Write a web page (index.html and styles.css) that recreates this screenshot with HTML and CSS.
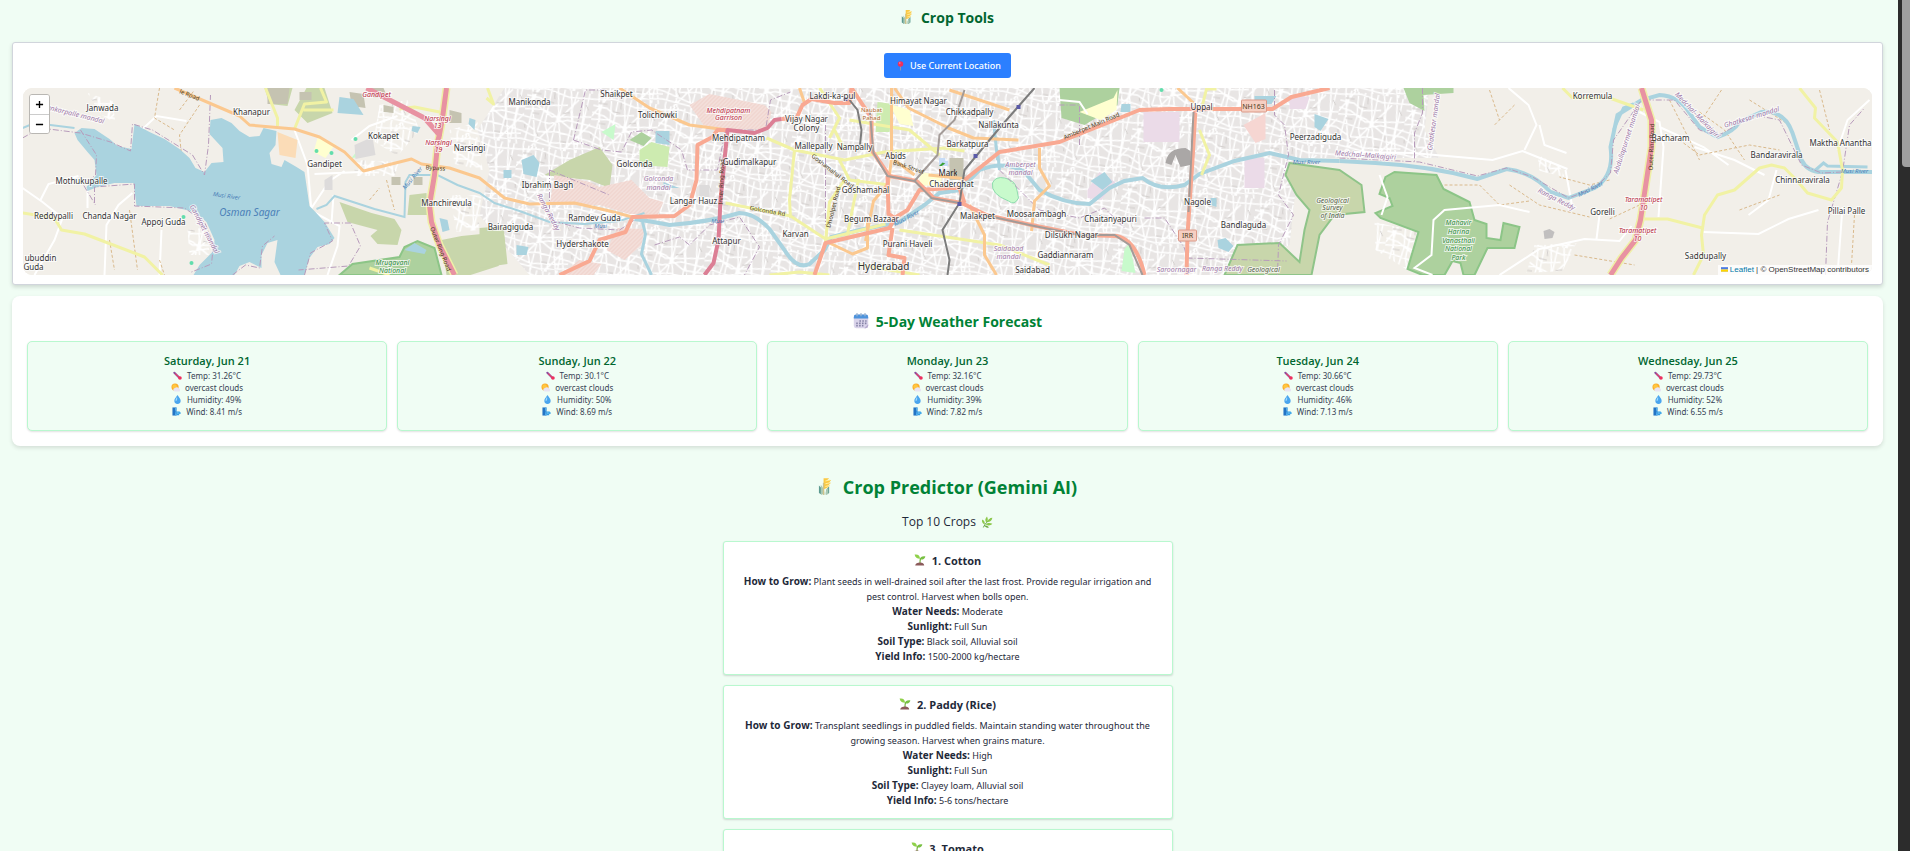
FILE: index.html
```html
<!DOCTYPE html>
<html lang="en">
<head>
<meta charset="utf-8">
<title>Crop Tools</title>
<link rel="stylesheet" href="styles.css">
</head>
<body>
<svg class="defs" aria-hidden="true">
  <symbol id="wheat" viewBox="0 0 14 20">
    <path d="M1 17V9l3 3v7zM12 10v7l-3 2c-1-4 0-7 3-9z" fill="#5d9a90"/>
    <path d="M3 18V8c3 3 4 7 4 11M8 19c0-4 1-6 3-8v7z" fill="#a9c9b4"/>
    <path d="M6 1h6l-2 2h4l-2 3h2l-3 3h2l-4 3-3 1V5z" fill="#fbc944"/>
    <path d="M8 4l5-1M8 7l5-1M8 10l4-1" stroke="#fff0a8" stroke-width="1"/>
    <path d="M6 6v13" stroke="#cfc38a" stroke-width="1.500"/>
  </symbol>
  <symbol id="pin" viewBox="0 0 12 20">
    <path d="M6 9v10" stroke="#8b93b8" stroke-width="2"/><circle cx="6" cy="6" r="5.500" fill="#f0305c"/><circle cx="4.500" cy="4" r="1.600" fill="#ff8ca4"/>
  </symbol>
  <symbol id="calendar" viewBox="0 0 20 20">
    <rect x="1" y="2" width="18" height="17" rx="3" fill="#d9d3ea"/><path d="M1 7V5q0-3 3-3h12q3 0 3 3v2z" fill="#4d93dc"/>
    <path d="M5 0v4M10 0v4M15 0v4" stroke="#9fb6cf" stroke-width="1.500"/>
    <path d="M8 10h9M4 13h13M4 16h9" stroke="#8784a8" stroke-width="2" stroke-dasharray="2 1.600"/>
    <path d="M14 19l5-5v2q0 3-3 3z" fill="#b7abd0"/>
  </symbol>
  <symbol id="thermometer" viewBox="0 0 20 20">
    <path d="M3 4l11 11" stroke="#8c4f9e" stroke-width="4.500" stroke-linecap="round"/><path d="M5 6l10 10" stroke="#ee4068" stroke-width="2.500"/><circle cx="15.500" cy="15.500" r="4" fill="#ef2f5d"/>
  </symbol>
  <symbol id="cloud" viewBox="0 0 20 20">
    <circle cx="9" cy="9" r="8" fill="#fbab2b"/><circle cx="8" cy="8" r="5" fill="#ffc740"/><path d="M9 19a4 4 0 0 1 0-8 5 5 0 0 1 8 1 3.500 3.500 0 0 1 0 7z" fill="#e9e4f3"/>
  </symbol>
  <symbol id="drop" viewBox="0 0 20 20">
    <path d="M10 0c3 5 7 8 7 13a7 7 0 0 1-14 0C3 8 7 5 10 0z" fill="#4aa5ee"/><path d="M9 4c-2 4-4 6-3 10 3 0 4-5 3-10z" fill="#9fdcff"/>
  </symbol>
  <symbol id="wind" viewBox="0 0 20 20">
    <path d="M1 1h9v18H1z" fill="#2474c4"/><path d="M7 1h3v5c-3 2-3 6 0 8v5H7z" fill="#5bb7f0"/><path d="M9 11h7M9 14h9M11 17h4" stroke="#2e9be6" stroke-width="2.500" stroke-linecap="round"/><circle cx="16.500" cy="13" r="2.500" fill="#3fa9ec"/>
  </symbol>
  <symbol id="herb" viewBox="0 0 20 20">
    <path d="M4 19C7 12 11 9 17 4" stroke="#5a9a3b" stroke-width="1.600" fill="none"/>
    <path d="M9 11C6 8 7 4 10 1c2 4 2 7-1 10zM6 14C2 13 1 9 2 6c4 2 5 5 4 8zM11 10c0-4 3-6 8-7-1 5-4 7-8 7zM8 14c3-3 7-3 11-1-3 3-7 4-11 1z" fill="#8cc84b"/>
    <path d="M6 16c3 0 6 1 7 3-3 1-6 0-7-3z" fill="#6aa83f"/>
  </symbol>
  <symbol id="seedling" viewBox="0 0 20 20">
    <path d="M10 15c0-4 0-5 1-8" stroke="#6fae3a" stroke-width="2" fill="none"/><path d="M1 1c5-1 9 1 9 7C5 8 2 6 1 1z" fill="#8fd14a"/><path d="M10 9c0-4 4-6 9-5-1 4-4 6-9 5z" fill="#79c143"/>
    <path d="M2 19c0-3 4-5 8-5s7 2 7 5z" fill="#8b5a5a"/>
  </symbol>
</svg>

<div class="screen">
<main class="page">
  <h1 class="page-title"><svg class="icon icon-wheat"><use href="#wheat"/></svg>Crop Tools</h1>

  <section class="map-card">
    <button class="locate" type="button"><svg class="icon icon-sm"><use href="#pin"/></svg>Use Current Location</button>
    <div class="map">
      <svg class="map-art" viewBox="23 88 1850 187" preserveAspectRatio="xMidYMid slice" role="img" aria-label="Map of Hyderabad">
        <defs>
          <pattern id="streets" width="67" height="61" patternUnits="userSpaceOnUse" patternTransform="rotate(9)">
            <path d="M0 5l20-3 22 5 25-2M0 11l14 1 10 6 18-3M0 18l12 2 16 9 39-6M0 25l18-2 10 3 20 12 19 0M0 32l26 4 18-6 23 2M0 38l15 8 21-3 31 4M0 47l30 8 37-5M0 55l40 4 27-4M4 0l4 22-4 39M10 0l-3 20 9 41M17 0l2 25-6 36M24 0l-2 36 9 25M30 0l4 24-4 37M37 0l-2 31 7 30M43 0l6 30-3 31M50 0l-4 21 10 40M56 0l3 25-2 36M62 0l-3 40 5 21M0 22L14 0M12 61L52 8M44 61L67 30" stroke="#fff" stroke-width="1.500" fill="none"/>
            <path d="M5 8h9M20 14l8 1M38 24l7-2M8 28h7M14 45l3 5M27 4l1 7M50 39v6M2 40l1 4M60 12l3 5M40 52h6" stroke="#d2cecc" stroke-width="1"/>
          </pattern>
          <pattern id="hatch" width="4" height="4" patternUnits="userSpaceOnUse"><rect width="4" height="4" fill="#f3ded9"/><path d="M0 4L4 0" stroke="#efcfc9" stroke-width="1"/></pattern>
        </defs>
        <rect x="23" y="88" width="1850" height="187" fill="#f2efe9"/>
        <path d="M505 88H1430L1425 130 1440 158H1300L1295 200 1290 245 1225 275H530L500 240 480 215 490 170 478 130z" fill="#e8e5e4"/>
        <path d="M505 88H1430L1425 130 1440 158H1300L1295 200 1290 245 1225 275H530L500 240 480 215 490 170 478 130zM380 105l28-5 12 30-22 26-24-15zM450 130l28-8 5 48-28-6zM355 160l45 2-5 14-40 0zM450 195l32 0-3 35-22 2zM88 93l25 8 3 22-14-8zM188 230l20-3 2 28-20 0zM1375 222l45 10-12 38-32-20zM1535 245l42-2-14 28-36 2zM1538 155l22 10 5 12-25-6z" fill="url(#streets)"/>
        <g class="streets">
          <path d="M23 188l20 14 20 16-8 22-20 35M41 200l8-16 30-8M105 275l2-50 12-20 14-12M88 208l0-18M160 275l2-45M142 130l15-14 30 5M295 130l13 35 4 46 28 15-2 20-10 29M315 174l45-2M310 211l20-30 15-10M334 195l-2 28M352 140l18-14 28-10M1353 152l60 1 80 7 30-9 45 18M1525 150l12-25-8-20-20-17M1566 170l7 38M1600 215l-3 24M1500 275l40-26 45-10 35 2 12-15M1640 112l20 10 4 25-5 70M1695 147l40 13 30 15M1660 127l44 20 25 18M1704 232l55 2 30-15 30-9M1777 170l-8 30-20 15M1843 207l-5 68M1838 150l10-30 22-20M1540 125l5 20 22 8"/>
        </g>
        <g class="tracks">
          <path d="M160 88l-5 30 20 12M200 105l-20 30 2 20M180 110l15-20M110 240l5 30M130 210l8 60M160 260l5 15M1445 185l35 0 20 20 30-4M1510 185l30 20 50 12M1610 180l-20 5-30-8M1680 140l20 15 50-10 30 5M1700 112l25 18 20 30M1670 100l30 60M1640 205l-30 14M1740 210l40-15M1722 90l-20 30M1750 100l40 25M1820 90l10 40M1855 215l-3 50M1490 90l10 30M1515 105l-20 20M1575 255l60 10M1380 190l20 15M387 180l8 30M370 200l10-12"/>
        </g>
        <g fill="#c8d6ab">
          <path d="M340 202l32 11 23 6 7 11-4 15-20-1-7-8 7-6-30-8zM410 195l17-2 1 22-20 0zM442 240l20-4 30-3 10 25-3 8-28 9h-24z"/>
          <path d="M545 175l25-15 30-13 13 18-3 23-20-8-30-3zM480 228l24-2 4 38-28 4z"/>
          <path class="park-edge" d="M1290 163l50 7 22 15 3 27-30 3-15 20-8 40h-87l13-30 42-2 20 19 5-32 5-20-13-15-11-20z"/>
          <path d="M295 110l12-22h18l8 25-25 10zM265 88h28l-5 18-18-2z"/>
        </g>
        <g fill="#add19e">
          <path class="reserve" d="M340 275l13-11 47-7 5-10 13-6 17 7 7 27z"/>
          <path class="reserve" d="M1386 177l9-5 42 3 7 14 26 13 5 18 12 4v14l14 2 3-17 16 4-5 21-27 0-13 27h-11l-3-12-8-2-8 14h-22l-15-6 11-37-38-14-5-5 17-7-3-8-10-4z"/>
          <path d="M1060 88h60l-2 17-33 20-23-7zM1404 88h50l0 5-30 2 1 16-15-8zM630 140l12-8 10 6-8 8z"/>
        </g>
        <g fill="#cdebb0"><path d="M640 150l12-8 18 5-2 20-28-2zM878 102l16 2-4 28-14 0z"/></g>
        <g fill="#c8facc" stroke="#8fdcae"><path d="M993 183q3-7 12-5 10 2 12 10l2 10q-4 8-10 3-18-7-16-18z"/><path stroke="none" d="M602 132l14-8-2 16zM352 158l8-10 0 9zM1130 243l6 30-14-2 3-22z"/></g>
        <g fill="url(#hatch)"><path d="M555 175l35 7 10 5 32-7 18 18 14 4-6 13-28-1-30-9h-50zM618 228l27 1-3 16-17 15-18-10zM690 105l20-11 55 11 7 7-4 18-62-2zM560 275l20-15 22 4-8 11z"/></g>
        <g fill="#ebdbe8"><path d="M1144 112h36v30h-36zM1088 190l12-18 16 10-14 18-14-2zM1245 158h20v30h-20zM1290 95l20 2-4 12h-16z"/></g>
        <path d="M1244 125l22-12v26l-10 4z" fill="#f6d6d2"/>
        <path d="M278 132l20 8-2 18-16-3z" fill="#fbdcb7"/>
        <g fill="#ffffd0"><path d="M318 138l18 6-10 14-12-6zM1080 112l34-14 4-8-1 20-16 10zM920 172l22 3v12l-22-2zM890 104l20 6 4 16-14-2z"/></g>
        <g fill="#c5c3b1"><path d="M268 88h22l-2 16-20 0zM350 92l14 2 2 14-14-2zM370 88h14l4 10-14 0zM384 105l10 2v6l-10-1zM300 92l12 0v8h-12zM450 110l12 3v10l-12 0zM392 177h9v8h-9zM414 177h9v8h-9zM950 158h14v22h-14z"/></g>
        <g fill="#dddbdb"><path d="M355 145l18-8 3 18-20 4zM700 185h10v12h-10zM325 180l8-5v15h-8z"/></g>
        <path d="M1166 163q2-15 20-15l5 3v14l-10 2-5-12-4 10z" fill="#aaa7a6"/>
        <path d="M1544 231l6-2 5 3-2 6-8 1z" fill="#c1bfbf"/>

        <g class="water-fill">
          <path d="M75 133L82 128 95 129 110 139 118 146 132 149 135 124 150 132 165 139 180 149 190 158 196 168 205 172 212 163 224 162 223 148 210 134 211 120 222 118 232 123 240 131 250 137 260 136 264 128 277 131 276 145 270 153 272 164 282 167 285 160 297 167 305 172 310 206 315 211 325 222 335 238 330 244 318 247 310 258 305 275H281L275 262 278 240 268 243 262 255 262 268 250 262 240 266 235 275H194L200 265 213 252 215 240 207 222 195 212 170 206H137L134 183 115 183 98 187 88 191 87 187 97 175 95 160 88 152 78 140z"/>
          <path d="M340 97l14 2 10 16-26-2zM405 250l10-7 12 7-2 4-16-3zM440 218l8 2 2 10-7 2zM470 118l6 2-1 10-6-6zM522 160l12-5 6 8-3 14-13-3zM504 170l8 0v8h-8zM517 245l12 2-2 8h-10zM656 131l14 0 0 14-14-2zM1122 104h9v8h-10zM1091 181l14-9 8 10-10 8zM1211 198l6 0v9l-6-2zM1218 240l8-2 8 8-5 6-10-4zM1255 96h22l-5 8-17 0zM1315 114l14 5-8 12-6-4zM413 126l8 1-3 6-6-2zM680 188l-16 0 0-6z"/>
        </g>
        <g class="river">
          <path d="M23 128l12-5 40 5" stroke-width="2"/>
          <path d="M317 209l10-4 8-9 40 13 30 8 1-35 4-7 28 0 20 10 22 8 15 10 25 8 30 11 35 2 35-3 25-8" stroke-width="2"/>
          <path d="M635 219Q655 222 670 225 Q710 222 740 213 Q755 213 770 229L785 250Q797 270 810 264L825 250 832 237 860 230 900 222 925 205 940 193 960 190 980 170Q1005 160 1025 172L1040 190Q1065 204 1090 204L1110 188 1125 181 1143 178Q1160 192 1185 185L1200 174 1235 161 1270 153 1300 160 1340 161" stroke-width="4"/>
          <path d="M643 222l3 12-4 20 10 21M998 160l-4-40M998 150l2 20" stroke-width="3"/>
          <path d="M1340 161L1376 163Q1431 166 1478 179L1507 169Q1533 172 1551 192L1569 198 1595 188Q1615 176 1611 147L1618 115 1642 100 1660 95Q1680 96 1690 113L1700 127 1718 137Q1734 132 1740 122L1762 112Q1785 110 1793 133L1802 160Q1808 172 1822 172H1873" stroke-width="4"/>
          <path d="M1614 130l10-22 10-4M1816 170l8-7 4 3 40 1" stroke-width="3"/>
        </g>
        <g class="border">
          <path d="M23 138l18-10 40 5 30 9 20 9 2-27 20 6 40 25 12 20 4-30 2-50M81 130l16 25-1 20-12 10 12 20M95 203v-16l40-3v22l50 2 20 14 9 22-2 20-20 8M233 275l13-10 14 3 3-22 12-10M305 275l6-22 22-12-8-18 26 0 10 23-12 20-50 4"/>
          <path d="M574 140l12-50 20 0M574 140l28 10 20 2 10-20 20-2 30 20 6 20h30l8-40 40 0 5-30 20-8M550 170l60 25M550 170v50l30 8 40 2 15-10M655 245l25-8 10 8 20-20 30-8 20 30-15 28M826 125v100M1000 170l20 20 20 20 40 8 25-10 20 20M1080 145v-40l-20 0M1145 218l20 0 20 30 5 25M1187 258l100 3M1275 90l0 25 10 10 4 30-10 40 15 20-15 30-1 30M1423 88l0 25-8 20 0 30"/>
          <path d="M1340 158L1420 162 1478 176 1507 168 1533 177 1569 198 1595 188 1611 173 1614 140 1642 100 1675 100 1700 130 1718 136 1755 115 1780 120 1802 165 1822 173 1843 172 1850 125 1865 108M1843 172l-15 50-2 53"/>
        </g>

        <g class="road yellow">
          <path d="M23 213L55 218 62 230 85 234 145 257 163 275M266 88l12 30 0 8M295 129l10-25 22-2-6-14M304 110l30 0M400 109l15-2 30 6M1645 219h23l35 9M1694 275L1704 255 1702 235 1705 215 1718 195 1735 190 1760 168 1772 165 1785 168 1797 180 1808 193 1832 200 1842 188 1843 170 1838 142 1815 118 1816 108 1800 88M1563 88l10 10h37l34 12"/>
          <path d="M767 138l28 12 50 10 40-8 60-4 20 3M795 150l-5 50 1 18M726 203l65 13 35 23 60-15M845 150l-10-20M840 160l10 20 40 5M826 242l4-40 15-22M847 239l12-60M770 275l30-3 30 3M860 265l60 10M900 230l100 15 50 20M820 88l20 30-10 20M850 120l60 10 30 25M1202 109l5-20 10 0M1200 130l10 25-8 20M487 98l7 6-6-16M370 268l20 7"/>
        </g>
        <g class="road orange">
          <path d="M175 88L240 116 250 125 295 129 320 137 345 152 364 171 412 159 422 164 450 168 480 178 505 198 530 204 575 203 610 211 633 217M620 88l30 20 40 17 38 5"/>
          <path d="M892 88l0 70-3 25-15 18-8 40M800 88l5 15M895 88l14 20 40 20 25 10 45 2M929 175l40 4M1040 148v20l10 18-15 15-3 30M970 205l15 30 0 20 12 20M868 218v30l-15 6-25-12M895 160l20 15M1178 88l16 15M950 90l60 20"/>
        </g>
        <g class="road salmon">
          <path d="M560 275l30-14 10-21 26-8 7-15 42-1 15-11 7-25 1-35 15-8 5-7h10M782 119l15-1 6-13 9-6 23 4h15l2-15 12 18 8 12 0 32 18 26 27 5 17 17 28 5 25 12 45 10 50 10 35 1q20 4 28 39M888 176l1 38 6 4M815 275l11-32 64-15 5-10 13-8 12-20 30-2 10 0 5 15M893 228l-4 27 16 3-2 17"/>
          <path d="M965 180l35-28 60-10 55-22 25-10 30-1h103l19-12 38-9M1196 109l-3 51-5 75-1 40"/>
        </g>
        <g class="road casing">
          <path d="M447 88L443 118 438 145 435 175 430 205 432 222 440 245 455 275M1642 88L1652 120 1652 147 1647 180 1641 220 1636 240 1622 258 1611 275"/>
        </g>
        <g class="road motorway">
          <path d="M367 88l58 30 15 17-3 10M447 88L443 118 438 145 435 175 430 205 432 222 440 245 455 275M1642 88L1652 120 1652 147 1647 180 1641 220 1636 240 1622 258 1611 275"/>
        </g>
        <path class="road trunk" d="M782 119l-7 1-7 8-13 5-27-3-3 30-4 40-2 40-5 23-9 12"/>
        <g class="rail">
          <path d="M1035 88L1000 128 965 170 960 203 943 230 950 260 948 275M850 100l8 10 4 20-2 20"/>
          <path d="M965 90L955 120 940 135 938 155 915 181 932 198 960 203M870 108l4 45 14 23 27 5M985 215l45 10 50 10h35l15 10 13 30M1194 112l-5 100" class="metro"/>
        </g>
        <path d="M1433 275l-18-7 17-13 2-35 11-10 55-5 30 7M1380 175l8 22-6 18M1060 100l20 2 8 12" stroke="#fff" stroke-width="2" fill="none"/>
        <g fill="#62ddac"><circle cx="184" cy="217" r="2"/><circle cx="192" cy="263" r="2"/><circle cx="356" cy="139" r="2"/><circle cx="332" cy="153" r="2"/><circle cx="317" cy="151" r="2"/><circle cx="1162" cy="90" r="2"/></g>
        <g fill="#5a5aa8"><path d="M974 154h4v4h-4zM844 97h4v4h-4zM958 202h4v4h-4zM1017 105h4v4h-4z"/></g>

        <g class="shield"><rect x="1242" y="100" width="25" height="12" rx="1"/><rect x="1179" y="230" width="18" height="11" rx="1"/></g>
        <g class="lbl">
          <text x="103" y="107">Janwada</text><text x="252" y="111">Khanapur</text><text x="384" y="135">Kokapet</text><text x="325" y="163">Gandipet</text><text x="82" y="180">Mothukupalle</text><text x="54" y="215">Reddypalli</text><text x="110" y="215">Chanda Nagar</text><text x="164" y="221">Appoj Guda</text><text x="41" y="257">ubuddin</text><text x="34" y="266">Guda</text><text x="447" y="202">Manchirevula</text><text x="470" y="147">Narsingi</text>
          <text x="530" y="101">Manikonda</text><text x="617" y="93">Shaikpet</text><text x="658" y="114">Tolichowki</text><text x="833" y="95">Lakdi-ka-pul</text><text x="807" y="118">Vijay Nagar</text><text x="807" y="127">Colony</text><text x="919" y="100">Himayat Nagar</text><text x="739" y="137">Mehdipatnam</text><text x="814" y="145">Mallepally</text><text x="855" y="146">Nampally</text><text x="896" y="155">Abids</text><text x="635" y="163">Golconda</text><text x="750" y="161">Gudimalkapur</text><text x="548" y="184">Ibrahim Bagh</text><text x="866" y="189">Goshamahal</text><text x="694" y="200">Langar Hauz</text><text x="595" y="217">Ramdev Guda</text><text x="511" y="226">Bairagiguda</text><text x="583" y="243">Hydershakote</text><text x="727" y="240">Attapur</text><text x="796" y="233">Karvan</text><text x="872" y="218">Begum Bazaar</text><text x="908" y="243">Purani Haveli</text><text x="884" y="266" class="city">Hyderabad</text>
          <text x="970" y="111">Chikkadpally</text><text x="999" y="124">Nallakunta</text><text x="968" y="143">Barkatpura</text><text x="952" y="183">Chaderghat</text><text x="978" y="215">Malakpet</text><text x="1037" y="213">Moosarambagh</text><text x="1111" y="218">Chaitanyapuri</text><text x="1072" y="234">Dilsukh Nagar</text><text x="1066" y="254">Gaddiannaram</text><text x="1033" y="269">Saidabad</text><text x="1202" y="106">Uppal</text><text x="1316" y="136">Peerzadiguda</text><text x="1198" y="201">Nagole</text><text x="1244" y="224">Bandlaguda</text>
          <text x="1593" y="95">Korremula</text><text x="1671" y="137">Bacharam</text><text x="1841" y="142">Maktha Anantha</text><text x="1777" y="154">Bandaravirala</text><text x="1803" y="179">Chinnaravirala</text><text x="1603" y="211">Gorelli</text><text x="1847" y="210">Pillai Palle</text><text x="1706" y="255">Saddupally</text>
        </g>
        <g class="lbl small">
          <text x="1254" y="106" class="route">NH163</text><text x="1188" y="235" class="route">IRR</text>
          <text x="909" y="167" transform="rotate(18 909 167)">Bank Street</text><text x="768" y="211" transform="rotate(10 768 211)">Golconda Rd</text><text x="833" y="171" transform="rotate(38 833 171)">Goshamahal Road</text><text x="834" y="207" transform="rotate(-76 834 207)">Dhoolpet Road</text><text x="722" y="182" transform="rotate(-88 722 182)">Inner Ring Road</text><text x="1092" y="126" transform="rotate(-23 1092 126)">Amberpet Main Road</text><text x="1652" y="147" transform="rotate(-88 1652 147)">Outer Ring Road</text><text x="441" y="249" transform="rotate(68 441 249)">Outer Ring Road</text><text x="436" y="168" transform="rotate(5 436 168)">Bypass</text><text x="190" y="95" transform="rotate(22 190 95)">le Road</text>
        </g>
        <g class="lbl admin">
          <text x="76" y="114" transform="rotate(14 76 114)">ankarpalle mandal</text><text x="205" y="229" transform="rotate(62 205 229)">Gandipet mandal</text><text x="659" y="178">Golconda</text><text x="659" y="187">mandal</text><text x="549" y="212" transform="rotate(62 549 212)">Ranga Reddy</text><text x="1021" y="164">Amberpet</text><text x="1021" y="172">mandal</text><text x="1009" y="248">Saidabad</text><text x="1009" y="256">mandal</text><text x="1177" y="269">Saroornagar</text><text x="1223" y="268">Ranga Reddy</text><text x="1366" y="155" transform="rotate(4 1366 155)">Medchal–Malkajgiri</text><text x="1557" y="199" transform="rotate(27 1557 199)">Ranga Reddy</text><text x="1434" y="122" transform="rotate(-82 1434 122)">Ghatkesar mandal</text><text x="1627" y="139" transform="rotate(-72 1627 139)">Abdullapurmet mandal</text><text x="1698" y="115" transform="rotate(46 1698 115)">Medchal–Malkajgiri</text><text x="1752" y="117" transform="rotate(-17 1752 117)">Ghatkesar mandal</text>
        </g>
        <g class="lbl water"><text x="250" y="212" class="lake">Osman Sagar</text><text x="227" y="196" transform="rotate(8 227 196)">Musi River</text><text x="413" y="178" transform="rotate(-50 413 178)">Musi River</text><text x="601" y="226">Musi</text><text x="718" y="221">Musi</text><text x="907" y="218" transform="rotate(-28 907 218)">Musi River</text><text x="1591" y="189" transform="rotate(-27 1591 189)">Musi River</text><text x="1855" y="171">Musi River</text><text x="1307" y="162">Musi River</text></g>
        <g class="lbl transit"><text x="377" y="94">Gandipet</text><text x="438" y="118">Narsingi</text><text x="438" y="125">13</text><text x="439" y="142">Narsingi</text><text x="439" y="149">19</text><text x="729" y="110">Mehdipatnam</text><text x="729" y="117">Garrison</text><text x="1644" y="199">Taramatipet</text><text x="1644" y="207">10</text><text x="1638" y="230">Taramatipet</text><text x="1638" y="238">10</text></g>
        <g class="lbl nature"><text x="393" y="262">Mrugavani</text><text x="393" y="270">National</text><text x="1459" y="222">Mahavir</text><text x="1459" y="231">Harina</text><text x="1459" y="240">Vanasthali</text><text x="1459" y="248">National</text><text x="1459" y="257">Park</text></g>
        <g class="lbl survey"><text x="1333" y="200">Geological</text><text x="1333" y="207">Survey</text><text x="1333" y="215">of India</text><text x="1264" y="269">Geological</text></g>
        <g class="lbl peak"><text x="872" y="110">Naubat</text><text x="872" y="118">Pahad</text></g>
      </svg>
      <span class="marker"><svg class="broken" viewBox="0 0 10 10"><path d="M0 0h7l3 3v6H0z" fill="#c7dcf7"/><path d="M0 9l4-4 3 1-4 3z" fill="#3ba135"/><path d="M7 0v3h3z" fill="#fff"/></svg>Mark</span>
      <div class="zoom">
        <button type="button" aria-label="Zoom in"><svg viewBox="0 0 10 10"><path d="M5 1v8M1 5h8"/></svg></button>
        <button type="button" aria-label="Zoom out"><svg viewBox="0 0 10 10"><path d="M1 5h8"/></svg></button>
      </div>
      <div class="credit"><svg class="flag" viewBox="0 0 12 8"><path fill="#4c7be1" d="M0 0h12v4H0z"/><path fill="#ffd500" d="M0 4h12v3H0z"/><path fill="#e0bc00" d="M0 7h12v1H0z"/></svg> <a href="#">Leaflet</a> | © OpenStreetMap contributors</div>
    </div>
  </section>

  <section class="forecast">
    <h2 class="forecast-title"><svg class="icon icon-md"><use href="#calendar"/></svg>5-Day Weather Forecast</h2>
    <div class="days">
      <article class="day"><h3>Saturday, Jun 21</h3><p><svg class="icon icon-xs"><use href="#thermometer"/></svg>Temp: 31.26°C</p><p><svg class="icon icon-xs"><use href="#cloud"/></svg>overcast clouds</p><p><svg class="icon icon-xs"><use href="#drop"/></svg>Humidity: 49%</p><p><svg class="icon icon-xs"><use href="#wind"/></svg>Wind: 8.41 m/s</p></article>
      <article class="day"><h3>Sunday, Jun 22</h3><p><svg class="icon icon-xs"><use href="#thermometer"/></svg>Temp: 30.1°C</p><p><svg class="icon icon-xs"><use href="#cloud"/></svg>overcast clouds</p><p><svg class="icon icon-xs"><use href="#drop"/></svg>Humidity: 50%</p><p><svg class="icon icon-xs"><use href="#wind"/></svg>Wind: 8.69 m/s</p></article>
      <article class="day"><h3>Monday, Jun 23</h3><p><svg class="icon icon-xs"><use href="#thermometer"/></svg>Temp: 32.16°C</p><p><svg class="icon icon-xs"><use href="#cloud"/></svg>overcast clouds</p><p><svg class="icon icon-xs"><use href="#drop"/></svg>Humidity: 39%</p><p><svg class="icon icon-xs"><use href="#wind"/></svg>Wind: 7.82 m/s</p></article>
      <article class="day"><h3>Tuesday, Jun 24</h3><p><svg class="icon icon-xs"><use href="#thermometer"/></svg>Temp: 30.66°C</p><p><svg class="icon icon-xs"><use href="#cloud"/></svg>overcast clouds</p><p><svg class="icon icon-xs"><use href="#drop"/></svg>Humidity: 46%</p><p><svg class="icon icon-xs"><use href="#wind"/></svg>Wind: 7.13 m/s</p></article>
      <article class="day"><h3>Wednesday, Jun 25</h3><p><svg class="icon icon-xs"><use href="#thermometer"/></svg>Temp: 29.73°C</p><p><svg class="icon icon-xs"><use href="#cloud"/></svg>overcast clouds</p><p><svg class="icon icon-xs"><use href="#drop"/></svg>Humidity: 52%</p><p><svg class="icon icon-xs"><use href="#wind"/></svg>Wind: 6.55 m/s</p></article>
    </div>
  </section>

  <section class="predictor">
    <h2 class="predictor-title"><svg class="icon icon-lg"><use href="#wheat"/></svg>Crop Predictor (Gemini AI)</h2>
    <h3 class="top-title">Top 10 Crops<svg class="icon icon-herb"><use href="#herb"/></svg></h3>
    <div class="crops">
      <article class="crop">
        <h4><svg class="icon icon-seed"><use href="#seedling"/></svg>1. Cotton</h4>
        <p><strong>How to Grow:</strong> Plant seeds in well-drained soil after the last frost. Provide regular irrigation and pest control. Harvest when bolls open.</p>
        <p><strong>Water Needs:</strong> Moderate</p><p><strong>Sunlight:</strong> Full Sun</p><p><strong>Soil Type:</strong> Black soil, Alluvial soil</p><p><strong>Yield Info:</strong> 1500-2000 kg/hectare</p>
      </article>
      <article class="crop">
        <h4><svg class="icon icon-seed"><use href="#seedling"/></svg>2. Paddy (Rice)</h4>
        <p><strong>How to Grow:</strong> Transplant seedlings in puddled fields. Maintain standing water throughout the growing season. Harvest when grains mature.</p>
        <p><strong>Water Needs:</strong> High</p><p><strong>Sunlight:</strong> Full Sun</p><p><strong>Soil Type:</strong> Clayey loam, Alluvial soil</p><p><strong>Yield Info:</strong> 5-6 tons/hectare</p>
      </article>
      <article class="crop">
        <h4><svg class="icon icon-seed"><use href="#seedling"/></svg>3. Tomato</h4>
      </article>
    </div>
  </section>
</main>
<div class="scrollbar" aria-hidden="true"><div class="thumb"></div></div>
</div>
</body>
</html>
```
FILE: styles.css
```css
* { box-sizing: border-box; }
body { margin: 0; font-family: "Open Sans", "Noto Sans", sans-serif; color: #1e2939; background: #f0fdf4; }
h1, h2, h3, h4, p { margin: 0; }
.defs { position: absolute; width: 0; height: 0; }

.screen { display: flex; height: 100vh; overflow: hidden; }
.page { flex: 1; min-width: 0; padding: 8px 15px 0 12px; text-align: center; overflow: hidden; }
.scrollbar { flex: none; width: 12px; padding-left: 4px; background: #2c2c2c; }
.thumb { height: 167px; background: #9f9f9f; border-radius: 0 0 0 4px; }

.icon { display: inline-block; flex: none; }
.icon-xs { width: 9px; height: 9px; margin-right: 5px; vertical-align: -1px; }
.icon-sm { width: 9px; height: 10px; margin-right: 5px; }
.icon-md { width: 16px; height: 16px; margin-right: 7px; vertical-align: -2px; }
.icon-wheat { width: 11px; height: 16px; margin-right: 9px; vertical-align: -2px; }
.icon-lg { width: 13px; height: 19px; margin-right: 12px; vertical-align: -2px; }
.icon-herb { width: 12px; height: 12px; margin-left: 5px; vertical-align: -2px; }
.icon-seed { width: 12px; height: 12px; margin-right: 6px; vertical-align: -1px; }

.page-title { margin-bottom: 14px; font-size: 14px; line-height: 20px; font-weight: 700; color: #016630; }

.map-card { display: flex; flex-direction: column; align-items: center; gap: 10px; padding: 10px 10px 9px; background: #fff; border: 1px solid #d1d5dc; border-radius: 3px; box-shadow: 0 2px 4px rgba(0, 0, 0, .15); }
.locate { display: flex; align-items: center; height: 25px; padding: 0 10px 0 12px; border: 0; border-radius: 3px; background: #2b7fff; color: #fff; font: 500 9px/15px "Noto Sans", sans-serif; }
.map { position: relative; width: 100%; height: 187px; overflow: hidden; border-radius: 9px; background: #f2efe9; }
.map-art { display: block; width: 100%; height: 100%; }

.streets { fill: none; stroke: #fff; stroke-width: 2; }
.tracks { fill: none; stroke: #d9b98c; stroke-width: 1; stroke-dasharray: 3 2; }
.park-edge { stroke: #8fc489; stroke-width: 2; }
.reserve { stroke: #8cc587; stroke-width: 2; }
.water-fill { fill: #aad3df; }
.river { fill: none; stroke: #aad3df; }
.border { fill: none; stroke: #b79bbb; stroke-width: 1; stroke-dasharray: 6 2 1 2; }
.road { fill: none; stroke-linejoin: round; }
.yellow { stroke: #f1f2a4; stroke-width: 3; }
.orange { stroke: #fbc88f; stroke-width: 3; }
.salmon { stroke: #f9a992; stroke-width: 4; }
.casing { stroke: #eff0a8; stroke-width: 8; }
.motorway { stroke: #e892a2; stroke-width: 5; }
.trunk { stroke: #dc7f95; stroke-width: 4; }
.rail { fill: none; stroke: #7c7c7c; stroke-width: 2; }
.metro { stroke: #a39b98; }
.shield { fill: #f6cfc2; stroke: #dd9a88; }

.lbl { font-family: "Noto Sans", sans-serif; font-size: 8px; fill: #333; stroke: rgba(255, 255, 255, .7); stroke-width: 2px; paint-order: stroke; text-anchor: middle; dominant-baseline: central; }
.city { font-size: 10px; }
.small { font-size: 6px; fill: #4a3c20; stroke: none; }
.route { font-size: 7px; }
.admin { font-size: 7px; font-style: italic; fill: #a079a8; }
.water { font-size: 6px; font-style: italic; fill: #4a80b8; stroke: none; }
.lake { font-size: 10px; }
.transit { font-size: 7px; font-style: italic; fill: #b8283f; }
.nature { font-size: 7px; font-style: italic; fill: #2f8a3c; }
.survey { font-size: 7px; font-style: italic; fill: #55614a; }
.peak { font-size: 6px; fill: #b06a30; }

.marker { position: absolute; left: 50%; top: 70px; transform: translateX(-50%); width: 18px; overflow: hidden; font: 8px/12px "Noto Sans", sans-serif; color: #222; text-align: left; }
.broken { display: block; width: 9px; height: 9px; }
.zoom { position: absolute; left: 6px; top: 6px; display: flex; flex-direction: column; border: 1px solid #b9b7b3; border-radius: 3px; overflow: hidden; }
.zoom button { display: grid; place-items: center; width: 19px; height: 19px; padding: 0; border: 0; background: #fff; }
.zoom button + button { border-top: 1px solid #ccc; }
.zoom svg { width: 9px; height: 9px; fill: none; stroke: #000; stroke-width: 1.5; }
.credit { position: absolute; right: 0; bottom: 0; padding: 0 3px; background: rgba(255, 255, 255, .8); font: 8px/10px "Liberation Sans", Arial, sans-serif; color: #333; }
.credit a { color: #0078a8; text-decoration: none; }
.flag { width: 7px; height: 5px; }

.forecast { margin-top: 11px; padding: 15px; background: #fff; border-radius: 8px; box-shadow: 0 2px 4px rgba(0, 0, 0, .12); }
.forecast-title { margin-bottom: 9px; font-size: 14px; line-height: 21px; font-weight: 700; color: #008236; }
.days { display: grid; grid-template-columns: repeat(5, 1fr); gap: 10px; }
.day { padding: 12px; background: #f0fdf4; border: 1px solid #b9f8cf; border-radius: 5px; box-shadow: 0 1px 2px rgba(0, 0, 0, .12); }
.day h3 { margin-bottom: 2px; font-size: 11px; line-height: 14px; font-weight: 600; color: #016630; }
.day p { font-family: "Noto Sans", sans-serif; font-size: 8px; line-height: 12px; color: #364153; }

.predictor { padding-top: 29px; }
.predictor-title { font-size: 18px; line-height: 24px; font-weight: 700; color: #008236; }
.top-title { margin: 13px 0 9px; font-size: 12px; line-height: 20px; font-weight: 500; }
.crops { display: grid; gap: 10px; max-width: 450px; margin: 0 auto; }
.crop { padding: 11px 16px 10px; background: #fff; border: 1px solid #b9f8cf; border-radius: 3px; box-shadow: 0 1px 2px rgba(0, 0, 0, .15); }
.crop h4 { margin-bottom: 5px; font-size: 11px; line-height: 16px; font-weight: 700; }
.crop p { font-family: "Noto Sans", sans-serif; font-size: 9px; line-height: 15px; }
.crop strong { font: 700 10px/15px "Open Sans", sans-serif; }
```
